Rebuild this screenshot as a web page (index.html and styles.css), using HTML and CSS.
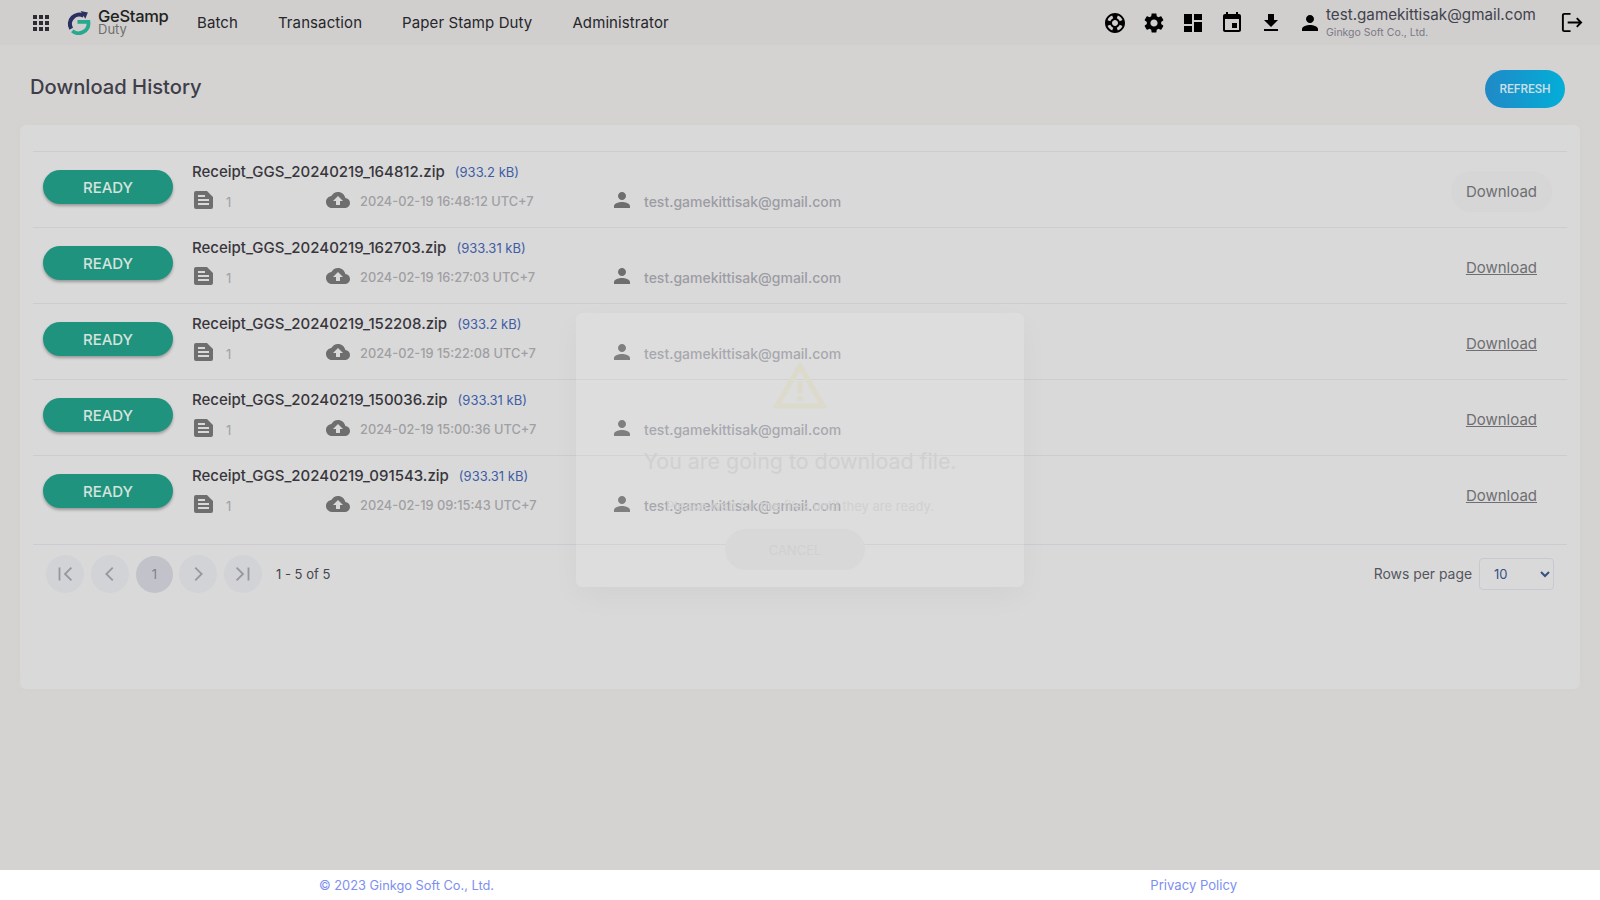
FILE: index.html
```html
<!DOCTYPE html>
<html>
<head>
	<meta charset="utf-8">
	<title>Download History</title>
	<link rel="stylesheet" href="styles.css">
</head>
<body>
<svg class="defs" width="0" height="0">
	<symbol id="i-apps" viewBox="0 0 24 24"><path d="M4 8h4V4H4v4zm6 12h4v-4h-4v4zm-6 0h4v-4H4v4zm0-6h4v-4H4v4zm6 0h4v-4h-4v4zm6-10v4h4V4h-4zm-6 4h4V4h-4v4zm6 6h4v-4h-4v4zm0 6h4v-4h-4v4z"/></symbol>
	<symbol id="i-ring" viewBox="0 0 24 24"><path d="M12 2C6.48 2 2 6.48 2 12s4.48 10 10 10 10-4.48 10-10S17.52 2 12 2zm7.46 7.12l-2.78 1.15c-.51-1.36-1.58-2.44-2.95-2.94l1.15-2.78c2.1.8 3.77 2.47 4.58 4.57zM12 15c-1.66 0-3-1.34-3-3s1.34-3 3-3 3 1.34 3 3-1.34 3-3 3zM9.13 4.54l1.17 2.78c-1.38.5-2.47 1.59-2.98 2.97L4.54 9.13c.81-2.11 2.48-3.78 4.59-4.59zM4.54 14.87l2.78-1.15c.51 1.38 1.59 2.46 2.97 2.96l-1.17 2.78c-2.1-.81-3.77-2.48-4.58-4.59zm10.34 4.59l-1.15-2.78c1.37-.51 2.45-1.59 2.95-2.97l2.78 1.17c-.81 2.1-2.48 3.77-4.58 4.58z"/></symbol>
	<symbol id="i-gear" viewBox="0 0 24 24"><path d="M19.14 12.94c.04-.3.06-.61.06-.94 0-.32-.02-.64-.07-.94l2.03-1.58c.18-.14.23-.41.12-.61l-1.92-3.32c-.12-.22-.37-.29-.59-.22l-2.39.96c-.5-.38-1.03-.7-1.62-.94l-.36-2.54c-.04-.24-.24-.41-.48-.41h-3.84c-.24 0-.43.17-.47.41l-.36 2.54c-.59.24-1.13.57-1.62.94l-2.39-.96c-.22-.08-.47 0-.59.22L2.74 8.87c-.12.21-.08.47.12.61l2.03 1.58c-.05.3-.09.63-.09.94s.02.64.07.94l-2.03 1.58c-.18.14-.23.41-.12.61l1.92 3.32c.12.22.37.29.59.22l2.39-.96c.5.38 1.03.7 1.62.94l.36 2.54c.05.24.24.41.48.41h3.84c.24 0 .44-.17.47-.41l.36-2.54c.59-.24 1.13-.56 1.62-.94l2.39.96c.22.08.47 0 .59-.22l1.92-3.32c.12-.22.07-.47-.12-.61l-2.01-1.58zM12 15.6c-1.98 0-3.6-1.62-3.6-3.6s1.62-3.6 3.6-3.6 3.6 1.62 3.6 3.6-1.62 3.6-3.6 3.6z"/></symbol>
	<symbol id="i-dash" viewBox="0 0 24 24"><path d="M3 13h8V3H3v10zm0 8h8v-6H3v6zm10 0h8V11h-8v10zm0-18v6h8V3h-8z"/></symbol>
	<symbol id="i-event" viewBox="0 0 24 24"><path d="M17 12h-5v5h5v-5zM16 1v2H8V1H6v2H5c-1.11 0-1.99.9-1.99 2L3 19c0 1.1.89 2 2 2h14c1.1 0 2-.9 2-2V5c0-1.1-.9-2-2-2h-1V1h-2zm3 18H5V8h14v11z"/></symbol>
	<symbol id="i-down" viewBox="0 0 24 24"><path d="M19 9h-4V3H9v6H5l7 7 7-7zM5 18v2h14v-2H5z"/></symbol>
	<symbol id="i-person" viewBox="0 0 24 24"><path d="M12 12c2.21 0 4-1.79 4-4s-1.79-4-4-4-4 1.79-4 4 1.79 4 4 4zm0 2c-2.67 0-8 1.34-8 4v2h16v-2c0-2.66-5.33-4-8-4z"/></symbol>
	<symbol id="i-doc" viewBox="0 0 19 18"><path fill-rule="evenodd" d="M2 0h11l6 6v10a2 2 0 0 1-2 2H2a2 2 0 0 1-2-2V2a2 2 0 0 1 2-2zM4 4v2h7V4H4zm0 4v2h11V8H4zm0 4v2h11v-2H4z"/></symbol>
	<symbol id="i-cloud" viewBox="0 0 24 24"><path d="M19.35 10.04C18.67 6.59 15.64 4 12 4 9.11 4 6.6 5.64 5.35 8.04 2.34 8.36 0 10.91 0 14c0 3.31 2.69 6 6 6h13c2.76 0 5-2.24 5-5 0-2.64-2.05-4.78-4.65-4.96zM14 13v4h-4v-4H7l5-5 5 5h-3z"/></symbol>
	<symbol id="i-warn" viewBox="0 0 24 24"><path d="M12 5.99L19.53 19H4.47L12 5.99M12 2L1 21h22L12 2zm1 14h-2v2h2v-2zm0-6h-2v5h2v-5z"/></symbol>
</svg>

<div class="page">
	<header class="topbar">
		<svg class="ico apps"><use href="#i-apps"/></svg>
		<div class="logo">
			<svg class="logo-mark" viewBox="0 0 24 24">
				<path d="M17 5.500A9 9 0 0 0 5 18" fill="none" stroke="#2b3063" stroke-width="4"/>
				<path d="M14 1l7 1.500-2.500 6z" fill="#2b3063"/>
				<path d="M11 11.500h10.500A9.500 9.500 0 0 1 6 20" fill="none" stroke="#25a98f" stroke-width="3.600"/>
			</svg>
			<div class="logo-text">
				<span class="logo-name">GeStamp</span>
				<span class="logo-sub">Duty</span>
			</div>
		</div>
		<nav class="nav">
			<a>Batch</a>
			<a>Transaction</a>
			<a>Paper Stamp Duty</a>
			<a>Administrator</a>
		</nav>
		<div class="tools">
			<svg class="ico"><use href="#i-ring"/></svg>
			<svg class="ico"><use href="#i-gear"/></svg>
			<svg class="ico"><use href="#i-dash"/></svg>
			<svg class="ico"><use href="#i-event"/></svg>
			<svg class="ico"><use href="#i-down"/></svg>
			<svg class="ico"><use href="#i-person"/></svg>
		</div>
		<div class="account">
			<div class="account-mail">test.gamekittisak@gmail.com</div>
			<div class="account-org">Ginkgo Soft Co., Ltd.</div>
		</div>
		<svg class="logout" viewBox="0 0 24 24" fill="none" stroke="#000" stroke-width="2">
			<path d="M11 3H4.500A1.500 1.500 0 0 0 3 4.500v15A1.500 1.500 0 0 0 4.500 21H11"/>
			<path d="M8 12h14M17.500 7.500L22 12l-4.500 4.500"/>
		</svg>
	</header>

	<main class="main">
		<div class="title-row">
			<h1>Download History</h1>
			<button class="refresh">REFRESH</button>
		</div>

		<section class="card">
			<div class="row">
				<button class="ready">READY</button>
				<div class="info">
					<div class="file"><b>Receipt_GGS_20240219_164812.zip</b><span>(933.2 kB)</span></div>
					<div class="meta">
						<div class="cell"><svg class="ico doc"><use href="#i-doc"/></svg><span class="count">1</span></div>
						<div class="cell"><svg class="ico cloud"><use href="#i-cloud"/></svg><span class="when">2024-02-19 16:48:12 UTC+7</span></div>
						<div class="cell"><svg class="ico user"><use href="#i-person"/></svg><span class="who">test.gamekittisak@gmail.com</span></div>
					</div>
				</div>
				<a class="dl dl-hover">Download</a>
			</div>
			<div class="row">
				<button class="ready">READY</button>
				<div class="info">
					<div class="file"><b>Receipt_GGS_20240219_162703.zip</b><span>(933.31 kB)</span></div>
					<div class="meta">
						<div class="cell"><svg class="ico doc"><use href="#i-doc"/></svg><span class="count">1</span></div>
						<div class="cell"><svg class="ico cloud"><use href="#i-cloud"/></svg><span class="when">2024-02-19 16:27:03 UTC+7</span></div>
						<div class="cell"><svg class="ico user"><use href="#i-person"/></svg><span class="who">test.gamekittisak@gmail.com</span></div>
					</div>
				</div>
				<a class="dl">Download</a>
			</div>
			<div class="row">
				<button class="ready">READY</button>
				<div class="info">
					<div class="file"><b>Receipt_GGS_20240219_152208.zip</b><span>(933.2 kB)</span></div>
					<div class="meta">
						<div class="cell"><svg class="ico doc"><use href="#i-doc"/></svg><span class="count">1</span></div>
						<div class="cell"><svg class="ico cloud"><use href="#i-cloud"/></svg><span class="when">2024-02-19 15:22:08 UTC+7</span></div>
						<div class="cell"><svg class="ico user"><use href="#i-person"/></svg><span class="who">test.gamekittisak@gmail.com</span></div>
					</div>
				</div>
				<a class="dl">Download</a>
			</div>
			<div class="row">
				<button class="ready">READY</button>
				<div class="info">
					<div class="file"><b>Receipt_GGS_20240219_150036.zip</b><span>(933.31 kB)</span></div>
					<div class="meta">
						<div class="cell"><svg class="ico doc"><use href="#i-doc"/></svg><span class="count">1</span></div>
						<div class="cell"><svg class="ico cloud"><use href="#i-cloud"/></svg><span class="when">2024-02-19 15:00:36 UTC+7</span></div>
						<div class="cell"><svg class="ico user"><use href="#i-person"/></svg><span class="who">test.gamekittisak@gmail.com</span></div>
					</div>
				</div>
				<a class="dl">Download</a>
			</div>
			<div class="row">
				<button class="ready">READY</button>
				<div class="info">
					<div class="file"><b>Receipt_GGS_20240219_091543.zip</b><span>(933.31 kB)</span></div>
					<div class="meta">
						<div class="cell"><svg class="ico doc"><use href="#i-doc"/></svg><span class="count">1</span></div>
						<div class="cell"><svg class="ico cloud"><use href="#i-cloud"/></svg><span class="when">2024-02-19 09:15:43 UTC+7</span></div>
						<div class="cell"><svg class="ico user"><use href="#i-person"/></svg><span class="who">test.gamekittisak@gmail.com</span></div>
					</div>
				</div>
				<a class="dl">Download</a>
			</div>

			<div class="pager">
				<div class="pg"><svg viewBox="0 0 24 24"><path d="M6 5v14M19 5l-7 7 7 7"/></svg></div>
				<div class="pg"><svg viewBox="0 0 24 24"><path d="M15 5l-7 7 7 7"/></svg></div>
				<div class="pg pg-on">1</div>
				<div class="pg"><svg viewBox="0 0 24 24"><path d="M9 5l7 7-7 7"/></svg></div>
				<div class="pg"><svg viewBox="0 0 24 24"><path d="M5 5l7 7-7 7M18 5v14"/></svg></div>
				<span class="pg-text">1 - 5 of 5</span>
				<label class="rows">Rows per page
					<select><option>10</option><option>25</option><option>50</option></select>
				</label>
			</div>
		</section>
	</main>

	<footer class="foot">
		<span class="copy">© 2023 Ginkgo Soft Co., Ltd.</span>
		<a>Privacy Policy</a>
	</footer>
</div>

<!-- modal still fading in when the shot was taken -->
<div class="modal">
	<svg class="ico warn"><use href="#i-warn"/></svg>
	<div class="modal-title">You are going to download file.</div>
	<div class="modal-note">Please wait for the files until they are ready.</div>
	<button class="cancel">CANCEL</button>
</div>
</body>
</html>
```

FILE: styles.css
```css
* {
	box-sizing: border-box;
}
html, body {
	margin: 0;
	height: 100%;
}
body {
	font-family: "Inter", "Open Sans", sans-serif;
	color: #3c3c46;
	background: #d4d3d1;
	overflow: hidden;
}
.defs {
	display: block;
	height: 0;
}
.page {
	display: flex;
	flex-direction: column;
	height: 900px;
}
.ico {
	width: 24px;
	height: 24px;
	display: block;
	flex: none;
}

/* top bar */
.topbar {
	height: 45px;
	flex: none;
	display: flex;
	align-items: center;
	background: #d0cfcd;
	padding: 0 17px 0 29px;
}
.apps {
	margin-right: 13px;
	fill: #2c2c30;
}
.logo {
	display: flex;
	align-items: center;
	gap: 7px;
	width: 131px;
}
.logo-mark {
	width: 25px;
	height: 25px;
}
.logo-text {
	display: flex;
	flex-direction: column;
	line-height: 12px;
	margin-top: -1px;
}
.logo-name {
	font-size: 16.5px;
	font-weight: 500;
	color: #222;
	letter-spacing: -0.3px;
	line-height: 14px;
}
.logo-sub {
	font-size: 13px;
	color: #6f6f6f;
}
.nav {
	display: flex;
	gap: 40px;
	font-size: 15px;
	letter-spacing: 0.1px;
	color: #26262c;
}
.tools {
	margin-left: auto;
	display: flex;
	gap: 15px;
	align-items: center;
}
.account {
	margin-left: 4px;
	width: 234px;
}
.account-mail {
	font-size: 15.2px;
	line-height: 18px;
	margin-top: 0;
	color: #42424e;
}
.account-org {
	font-size: 10.5px;
	line-height: 14px;
	margin-top: 2px;
	color: #7c7888;
}
.logout {
	width: 23px;
	height: 23px;
	flex: none;
}

/* page title */
.main {
	flex: 1;
	padding: 0 20px;
}
.title-row {
	height: 80px;
	display: flex;
	align-items: center;
	justify-content: space-between;
	padding: 2px 15px 0 10px;
}
h1 {
	margin: 0;
	font-size: 20.2px;
	font-weight: 500;
	color: #3e3e4a;
}
.refresh {
	width: 80px;
	height: 38px;
	margin-top: 6px;
	border: 0;
	border-radius: 19px;
	background: linear-gradient(90deg, #2089c6, #03aed8);
	color: #c8dfe6;
	font: 500 12px "Roboto", sans-serif;
}

/* list */
.card {
	height: 564px;
	background: #d9d9d9;
	border-radius: 6px;
	padding: 26px 13px 0;
	box-shadow: 0 0 8px #d2d1cf;
}
.row {
	height: 76px;
	border-top: 1px solid #cdcdcf;
	display: flex;
	align-items: center;
	padding: 0 30px 0 10px;
}
.ready {
	width: 130px;
	height: 34px;
	margin: -6px 19px 0 0;
	padding: 2px 0 0;
	border: 0;
	border-radius: 17px;
	background: #20937f;
	box-shadow: 0 2px 3px #9a9a9a;
	color: #d5e3dd;
	font: 500 15px "Inter", sans-serif;
}
.info {
	flex: 1;
	margin-top: -4px;
}
.file {
	display: flex;
	align-items: center;
	height: 20px;
	gap: 10px;
}
.file b {
	font-size: 15px;
	font-weight: 500;
	color: #38363c;
}
.file span {
	font-size: 13px;
	color: #3f5da6;
}
.meta {
	display: grid;
	grid-template-columns: 132px 287px 1fr;
	margin-top: 8px;
	padding-left: 2px;
}
.cell {
	display: flex;
	align-items: center;
	height: 24px;
	font-size: 13px;
	color: #a09fa3;
}
.doc {
	width: 19px;
	height: 18px;
	fill: #6e6e6e;
	margin: -4px 8px 0 0;
}
.count {
	margin-left: 5px;
}
.cloud {
	fill: #6e6e6e;
	margin: -4px 10px 0 0;
}
.user {
	fill: #6e6e6e;
	margin: -4px 10px 0 -3px;
}
.when {
	font-weight: 500;
	font-size: 12.8px;
}
.who {
	font-weight: 500;
	font-size: 14px;
	color: #9c9ca4;
}
.dl {
	font-size: 15px;
	color: #6f6f72;
	text-decoration: underline;
	margin-top: 3px;
}
.dl-hover {
	text-decoration: none;
	background: #d6d6d6;
	padding: 11px 15px;
	border-radius: 20px;
	margin-right: -15px;
}

/* pagination */
.pager {
	margin-top: 13px;
	border-top: 1px solid #cbcbd1;
	padding: 10px 13px 0 13px;
	display: flex;
	align-items: center;
}
.pg {
	width: 38px;
	height: 38px;
	border-radius: 50%;
	background: #d2d3d6;
	margin-right: 7px;
	display: flex;
	align-items: center;
	justify-content: center;
	font-size: 13px;
	color: #808088;
}
.pg svg {
	width: 22px;
	height: 22px;
	fill: none;
	stroke: #98979f;
	stroke-width: 2;
}
.pg-on {
	width: 37px;
	height: 37px;
	margin-right: 6px;
	background: #c2c3ca;
}
.pg-text {
	margin-left: 7px;
	font-size: 13px;
	color: #45454f;
}
.rows {
	margin-left: auto;
	display: flex;
	align-items: center;
	gap: 7px;
	font-size: 13.9px;
	color: #55555c;
}
.rows select {
	width: 75px;
	height: 32px;
	padding-left: 10px;
	border: 1px solid #c8c8d0;
	border-radius: 4px;
	background: #d9d9d9;
	font: 13px "Inter", sans-serif;
	color: #3a4f86;
}

/* footer */
.foot {
	height: 30px;
	flex: none;
	background: #fff;
	display: flex;
	align-items: center;
	justify-content: space-between;
	padding: 0 363px 0 319px;
	font-size: 13.1px;
	color: #7d8ff0;
}
.copy {
	font-size: 12.8px;
}

/* modal, over the list */
.modal {
	position: absolute;
	left: 576px;
	top: 313px;
	width: 448px;
	height: 274px;
	padding-top: 43px;
	background: rgba(255, 255, 255, 0.12);
	border-radius: 6px;
	box-shadow: 0 10px 30px rgba(0, 0, 0, 0.035);
	display: flex;
	flex-direction: column;
	align-items: center;
	color: #d0d0d0;
}
.warn {
	width: 60px;
	height: 60px;
	fill: #dcdacb;
}
.modal-title {
	margin-top: 30px;
	font-size: 21.4px;
	line-height: 30px;
}
.modal-note {
	margin-top: 21px;
	font-size: 13px;
	line-height: 18px;
}
.cancel {
	width: 140px;
	height: 41px;
	margin: 14px 0 0 -10px;
	border: 0;
	border-radius: 21px;
	background: #d8d8d8;
	color: #d0d0d0;
	font: 13px "Inter", sans-serif;
}
```
